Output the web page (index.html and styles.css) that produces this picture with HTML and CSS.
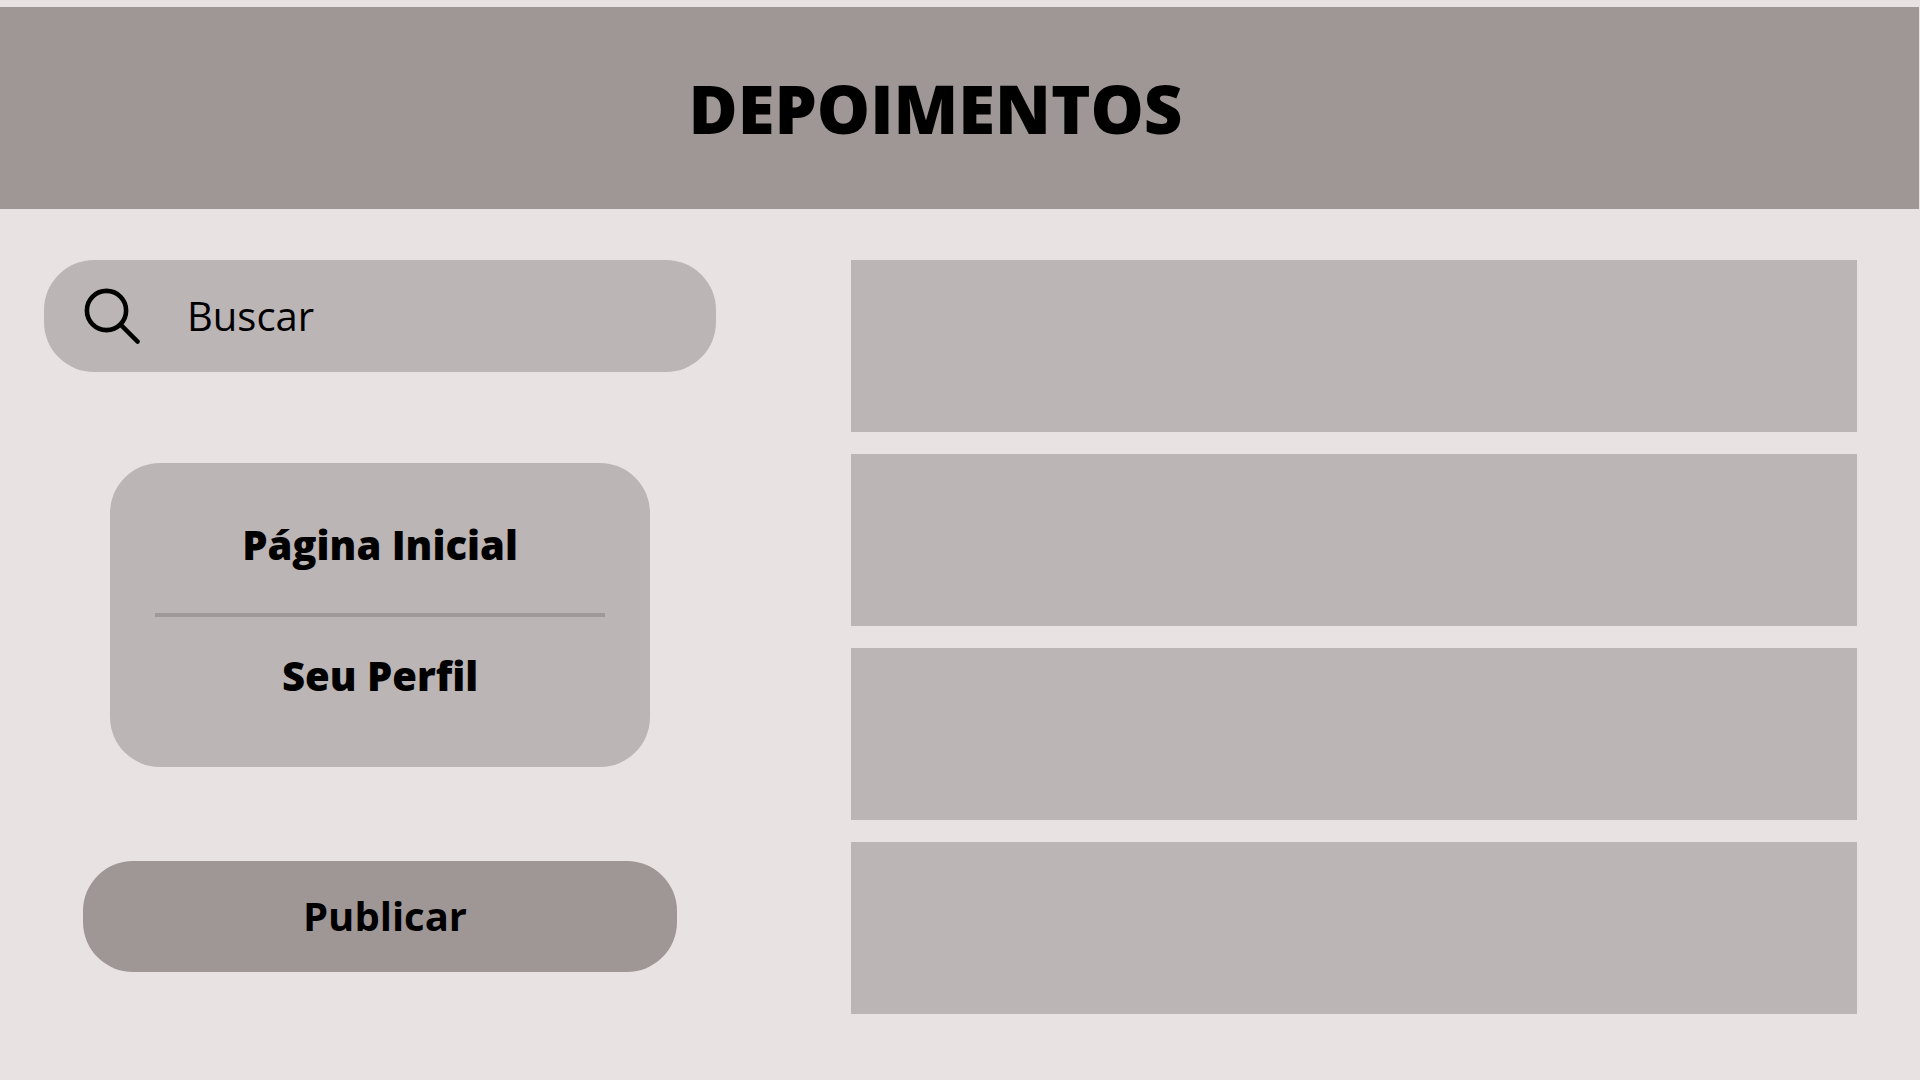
FILE: index.html
```html
<!DOCTYPE html>
<html lang="pt-BR">
<head>
  <meta charset="utf-8">
  <meta name="viewport" content="width=device-width, initial-scale=1">
  <title>Depoimentos</title>
  <link rel="stylesheet" href="styles.css">
</head>
<body>
  <header class="header">
    <h1 class="header-title">DEPOIMENTOS</h1>
  </header>
  <main class="layout">
    <aside class="sidebar">
      <form class="search" role="search">
        <label class="search-label" for="busca" aria-label="Buscar">
          <svg class="search-icon" viewBox="0 0 56 56" fill="none" stroke="currentColor" aria-hidden="true">
            <circle cx="22.5" cy="22.5" r="19.6" stroke-width="4.6"/>
            <path d="M36.6 36.6 53.6 53.6" stroke-width="4.4" stroke-linecap="round"/>
          </svg>
        </label>
        <input class="search-input" id="busca" type="text" placeholder="Buscar">
      </form>
      <nav class="menu">
        <a class="menu-link" href="#inicio">Página Inicial</a>
        <hr class="menu-divider">
        <a class="menu-link" href="#perfil">Seu Perfil</a>
      </nav>
      <button class="publish" type="button">Publicar</button>
    </aside>
    <section class="posts">
      <article class="post"></article>
      <article class="post"></article>
      <article class="post"></article>
      <article class="post"></article>
    </section>
  </main>
</body>
</html>
```

FILE: styles.css
```css
* {
  box-sizing: border-box;
}

body {
  margin: 0;
  background: #e8e2e2;
  color: #000;
  font-family: "Open Sans", "Noto Sans", sans-serif;
  font-size: 40px;
  line-height: 56px;
}

.header {
  margin: 7px 1px 0 0;
  padding: 55px 48px 55px 0;
  background: #9f9696;
  text-align: center;
}

.header-title {
  margin: 0;
  font-size: 67px;
  font-weight: 800;
  line-height: 92px;
}

.layout {
  display: grid;
  grid-template-columns: minmax(0, 672fr) minmax(0, 1006fr);
  column-gap: 135px;
  align-items: start;
  padding: 51px 63px 64px 44px;
}

.sidebar {
  display: flex;
  flex-direction: column;
}

.search {
  display: flex;
  align-items: center;
  gap: 47px;
  min-height: 112px;
  padding: 0 40px;
  border-radius: 50px;
  background: #bcb5b5;
}

.search-label {
  display: flex;
}

.search-icon {
  width: 56px;
  height: 56px;
}

.search-input {
  flex: 1;
  min-width: 0;
  height: 56px;
  padding: 0;
  border: 0;
  outline: 0;
  background: transparent;
  color: inherit;
  font: inherit;
}

.search-input::placeholder {
  color: #000;
  opacity: 1;
}

.menu {
  display: flex;
  flex-direction: column;
  margin: 91px 66px 0;
  padding: 54px 45px 63px;
  border-radius: 50px;
  background: #bcb5b5;
  text-align: center;
}

.menu-link {
  color: inherit;
  font-weight: 800;
  text-decoration: none;
}

.menu-divider {
  width: 100%;
  height: 4px;
  margin: 40px 0 31px;
  border: 0;
  background: #9f9999;
}

.publish {
  min-height: 111px;
  margin: 94px 39px 0;
  padding: 0 0 2px 10px;
  border: 0;
  border-radius: 50px;
  background: #9f9696;
  color: inherit;
  font: inherit;
  font-weight: 700;
  cursor: pointer;
}

.posts {
  display: grid;
  gap: 22px;
}

.post {
  min-height: 172px;
  background: #bcb5b5;
}
```
